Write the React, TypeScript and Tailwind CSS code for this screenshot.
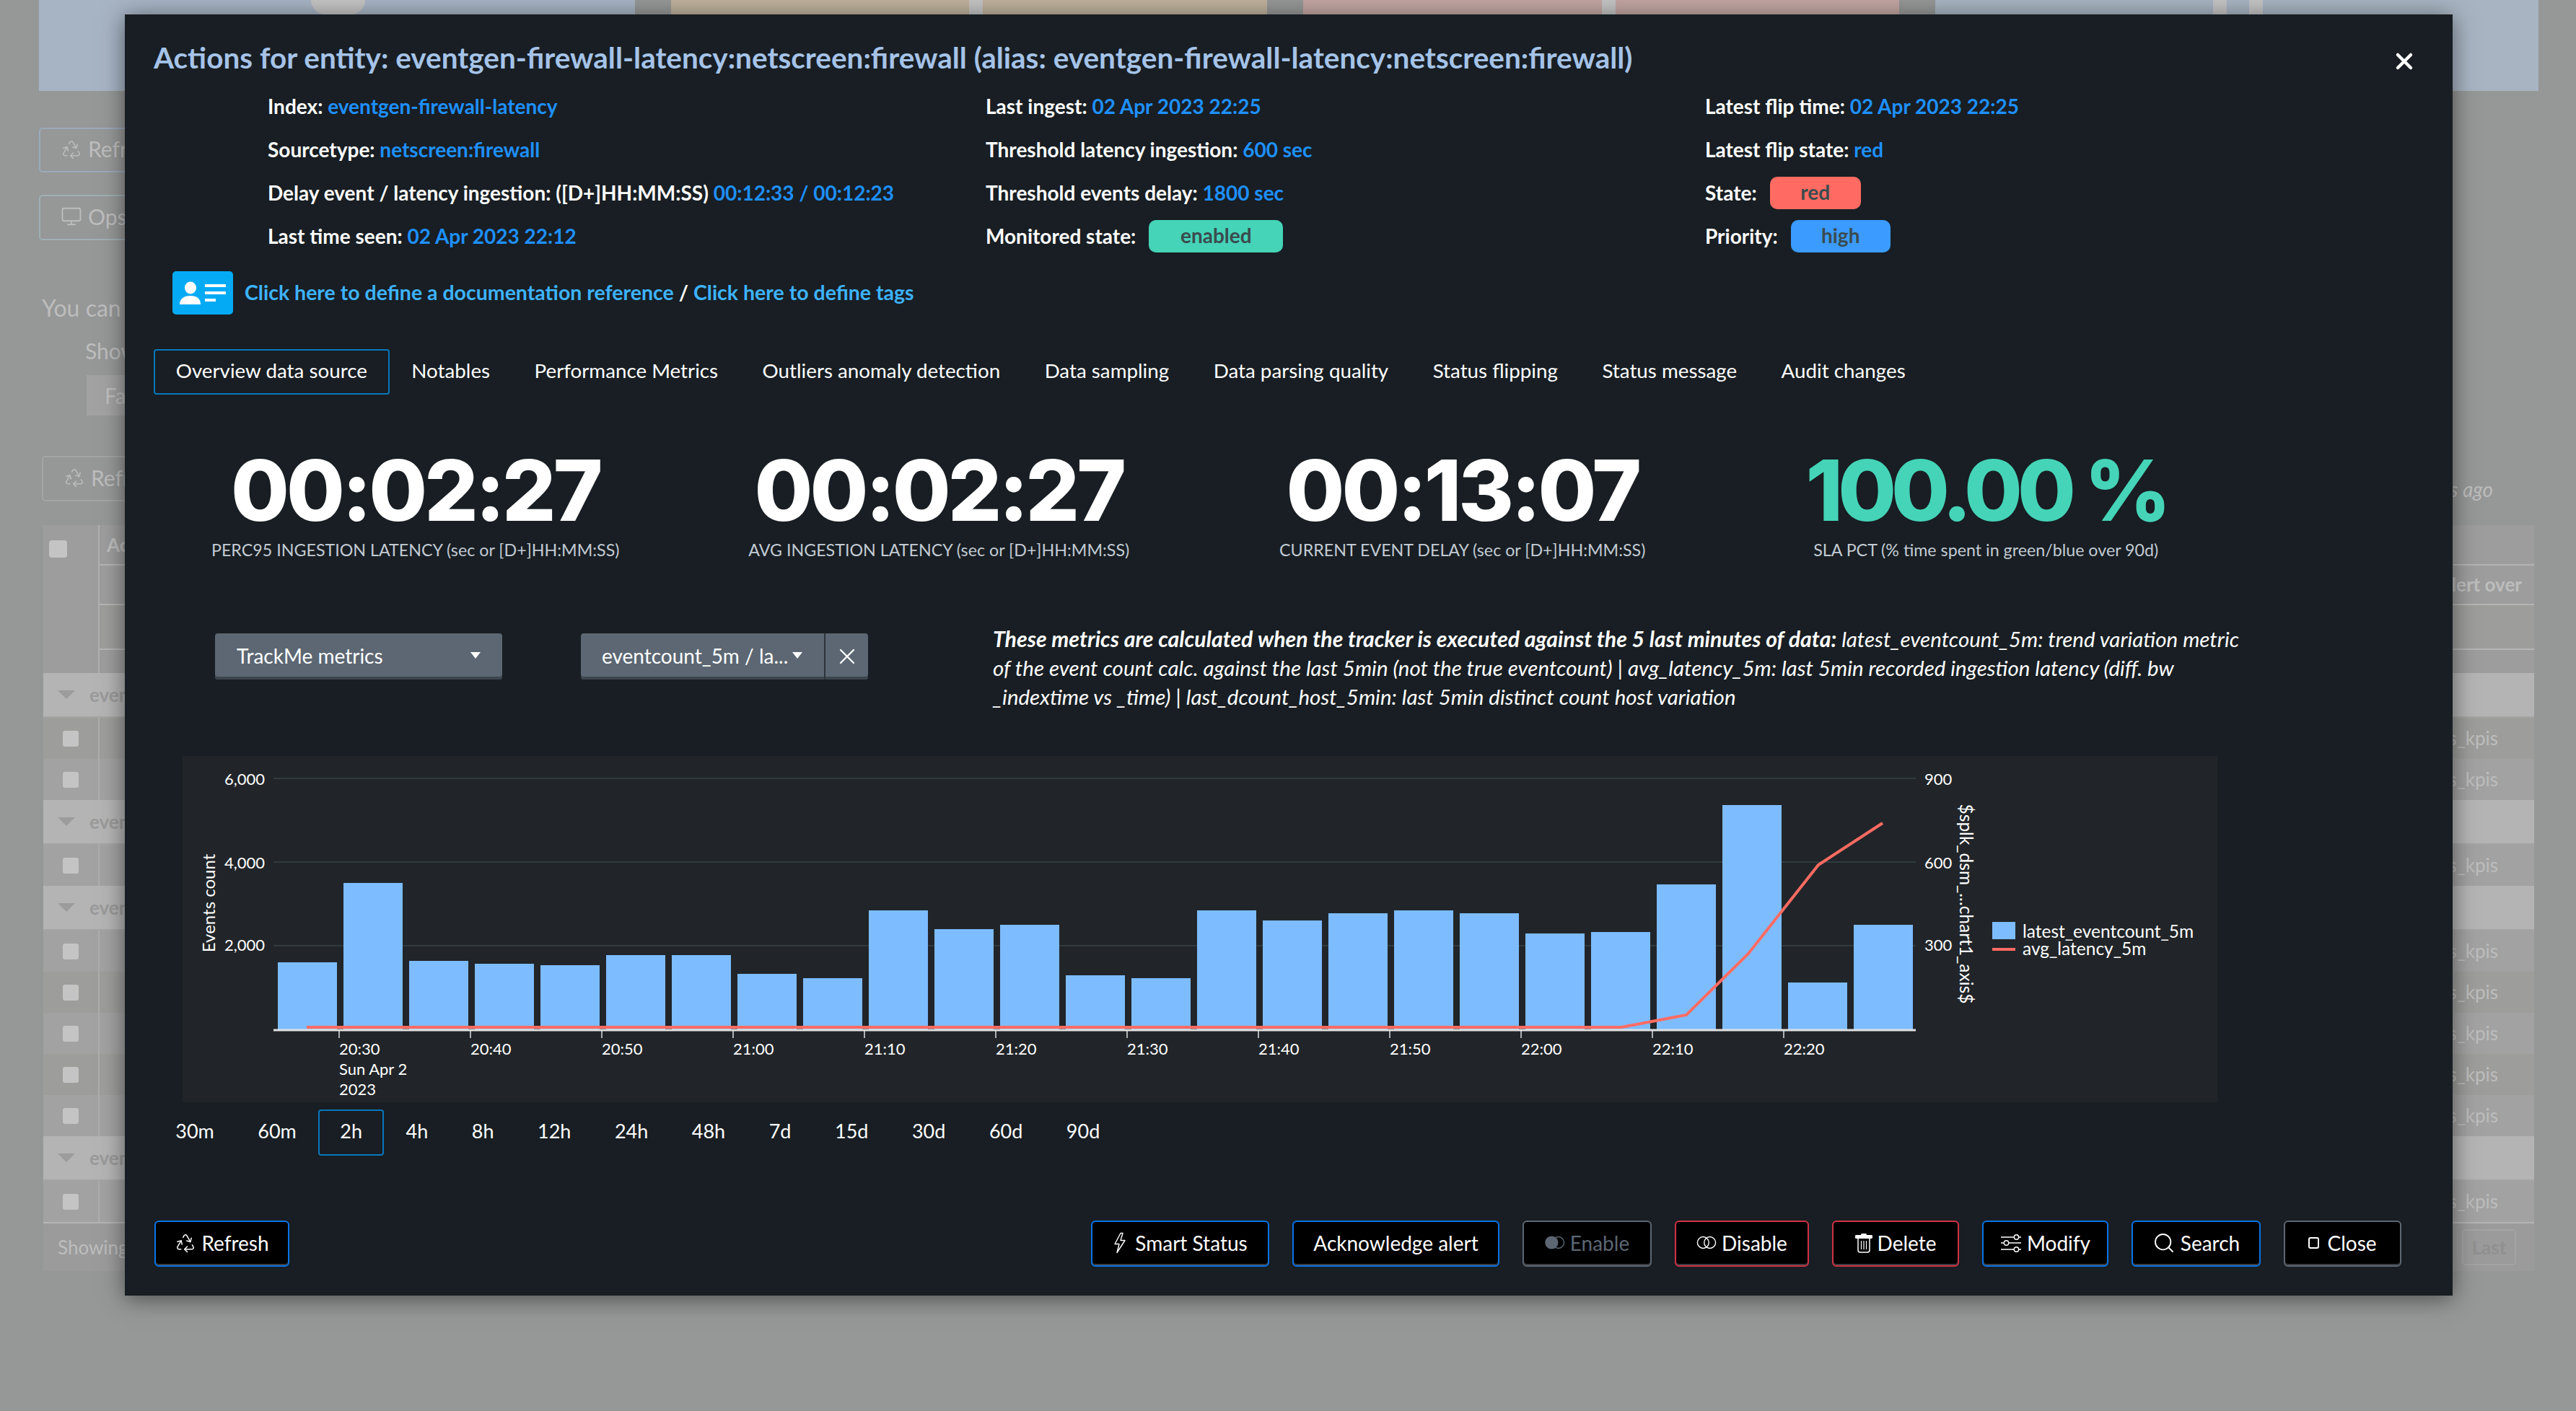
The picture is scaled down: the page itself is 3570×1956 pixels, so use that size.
import { Recycle, Monitor, Search, X } from 'lucide-react';

const barTops = [1334, 1224, 1332, 1336, 1338, 1324, 1324, 1350, 1356, 1262, 1288, 1282, 1352, 1356, 1262, 1276, 1266, 1262, 1266, 1294, 1292, 1226, 1116, 1362, 1282];
const ticks = ['20:30', '20:40', '20:50', '21:00', '21:10', '21:20', '21:30', '21:40', '21:50', '22:00', '22:10', '22:20'];
const tabs = ['Overview data source', 'Notables', 'Performance Metrics', 'Outliers anomaly detection', 'Data sampling', 'Data parsing quality', 'Status flipping', 'Status message', 'Audit changes'];
const ranges = ['30m', '60m', '2h', '4h', '8h', '12h', '24h', '48h', '7d', '15d', '30d', '60d', '90d'];
const singles = [
  { value: '00:02:27', label: 'PERC95 INGESTION LATENCY (sec or [D+]HH:MM:SS)', cls: 'text-white tracking-[-4px]' },
  { value: '00:02:27', label: 'AVG INGESTION LATENCY (sec or [D+]HH:MM:SS)', cls: 'text-white tracking-[-4px]' },
  { value: '00:13:07', label: 'CURRENT EVENT DELAY (sec or [D+]HH:MM:SS)', cls: 'text-white tracking-[-4px]' },
  { value: '100.00 %', label: 'SLA PCT (% time spent in green/blue over 90d)', cls: 'text-[#45d4b8] tracking-[-7px]' },
];
// g = group row, d = dark row, l = light row
const tableRows = ['g', 'd', 'l', 'g', 'l', 'g', 'l', 'd', 'l', 'd', 'l', 'g', 'l'];

const Val = ({ children }: { children: React.ReactNode }) => <span className="text-[#1e90ff]">{children}</span>;

const Info = ({ children }: { children: React.ReactNode }) => (
  <div className="flex h-[60px] items-center whitespace-pre pb-[2px]">{children}</div>
);

const Badge = ({ text, cls }: { text: string; cls: string }) => (
  <span className={`ml-[18px] flex h-[45px] items-center justify-center rounded-[10px] pb-[2px] text-[#3a4b4e] ${cls}`}>{text}</span>
);

const ToggleIcon = ({ filled }: { filled?: boolean }) => (
  <svg width="28" height="19" viewBox="0 0 30 20" fill="none" stroke="currentColor" strokeWidth="1.5">
    <circle cx="20" cy="10" r="8.5" />
    {filled ? <circle cx="10" cy="10" r="9" fill="currentColor" /> : <circle cx="10" cy="10" r="8.5" />}
  </svg>
);

const BoltIcon = () => (
  <svg width="20" height="30" viewBox="0 0 20 30" fill="none" stroke="currentColor" strokeWidth="1.4" strokeLinejoin="round" className="mr-[4px]">
    <path d="M11 1.5 3 16.5h6L6 28.5 17 11.5h-6l3-10z" />
  </svg>
);

const TrashIcon = () => (
  <svg width="24" height="28" viewBox="0 0 24 28" fill="none" stroke="currentColor" strokeWidth="1.5">
    <path d="M8 2.5a1.5 1.5 0 0 1 1.5-1.5h5A1.5 1.5 0 0 1 16 2.5V3h6a2 2 0 0 1 0 5H2a2 2 0 0 1 0-5h6z" fill="currentColor" stroke="none" />
    <path d="M4 8v16a3 3 0 0 0 3 3h10a3 3 0 0 0 3-3V8" />
    <path d="M8.5 11v12M12 11v12M15.5 11v12" strokeWidth="1.2" />
  </svg>
);

const SlidersIcon = () => (
  <svg width="30" height="26" viewBox="0 0 30 26" fill="none" stroke="currentColor" strokeWidth="1.4">
    <path d="M1 5h18M26 5h3M1 13h4M12 13h17M1 22h18M26 22h3" />
    <circle cx="22.5" cy="5" r="3.2" />
    <circle cx="8.5" cy="13" r="3.2" />
    <circle cx="22.5" cy="22" r="3.2" />
  </svg>
);

const ActionButton = ({ w, tone, children }: { w: string; tone: string; children: React.ReactNode }) => (
  <button className={`flex h-[64px] items-center justify-center gap-[7px] rounded-[6px] border-2 bg-black pb-[3px] text-[28px] text-white shadow-[inset_0_-2px_0_#3a3c40] ${w} ${tone}`}>
    {children}
  </button>
);

const Chart = () => (
  <svg viewBox="0 0 2820 480" className="h-[480px] w-[2820px]" fontFamily="Lato, sans-serif" fontSize="22" fill="#ffffff">
    {[31, 147, 263].map((y) => (
      <line key={y} x1="126" x2="2402" y1={y} y2={y} stroke="#2f3b40" strokeWidth="2" />
    ))}
    {barTops.map((top, i) => (
      <rect key={i} x={132 + i * 91} y={top - 1048} width="82" height={1427 - top} fill="#7dbcff" />
    ))}
    <line x1="126" x2="2402" y1="380" y2="380" stroke="#dfe0e2" strokeWidth="3" />
    <polyline points="172,376 1994,376 2084,359 2170,274 2267,151 2356,93" fill="none" stroke="#ff6b62" strokeWidth="4" />
    {ticks.map((t, i) => (
      <g key={t}>
        <line x1={217 + i * 182} x2={217 + i * 182} y1="381" y2="391" stroke="#dfe0e2" strokeWidth="1.5" />
        <text x={217 + i * 182} y="414">{t}</text>
      </g>
    ))}
    <text x="217" y="442">Sun Apr 2</text>
    <text x="217" y="470">2023</text>
    {[['6,000', 40], ['4,000', 156], ['2,000', 270]].map(([t, y]) => (
      <text key={t} x="114" y={y} textAnchor="end">{t}</text>
    ))}
    {[['900', 40], ['600', 156], ['300', 270]].map(([t, y]) => (
      <text key={t} x="2414" y={y}>{t}</text>
    ))}
    <text transform="translate(45 204) rotate(-90)" textAnchor="middle" fontSize="24">Events count</text>
    <text transform="translate(2463 205) rotate(90)" textAnchor="middle" fontSize="24.5">$splk_dsm_...chart1_axis$</text>
    <rect x="2508" y="230" width="32" height="24" fill="#7dbcff" />
    <text x="2550" y="252" fontSize="24.5">latest_eventcount_5m</text>
    <rect x="2508" y="266" width="32" height="4" fill="#ff6b62" />
    <text x="2550" y="276" fontSize="24.5">avg_latency_5m</text>
  </svg>
);

const PageBehind = () => (
  <div className="flex flex-col text-[#bdbdbd]">
    <div className="flex h-[126px] gap-[50px] pl-[54px]">
      <div className="h-full w-[826px] bg-[#a7b4c4] pl-[377px]"><div className="h-[20px] w-[75px] rounded-b-[30px] bg-[#c4c4c4]" /></div>
      <div className="h-full w-[826px] bg-[#bfb19d] pl-[413px]"><div className="h-[20px] w-[19px] bg-[#c4c4c4]" /></div>
      <div className="h-full w-[826px] bg-[#c2a6a3] pl-[414px]"><div className="h-[20px] w-[19px] bg-[#c4c4c4]" /></div>
      <div className="flex h-full w-[836px] gap-[31px] bg-[#a8b4c2] pl-[385px]">
        <div className="h-[20px] w-[19px] bg-[#c4c4c4]" />
        <div className="h-[20px] w-[19px] bg-[#c4c4c4]" />
      </div>
    </div>
    <div className="mt-[51px] ml-[54px] flex h-[62px] w-[300px] items-center gap-[8px] rounded-[5px] border-2 border-[#9aaabb] pb-[3px] pl-[28px] text-[30px]"><Recycle size={30} strokeWidth={1.25} />Refresh</div>
    <div className="mt-[31px] ml-[54px] flex h-[63px] w-[300px] items-center gap-[8px] rounded-[5px] border-2 border-[#9fb0b5] pb-[3px] pl-[28px] text-[30px]"><Monitor size={30} strokeWidth={1.5} />Ops:</div>
    <div className="mt-[74px] ml-[58px] h-[40px] text-[32px] leading-[40px]">You can</div>
    <div className="mt-[19px] ml-[118px] h-[40px] text-[30px] leading-[40px]">Show</div>
    <div className="mt-[14px] ml-[120px] h-[56px] w-[300px] bg-[#a2a2a2] pl-[25px] text-[30px] leading-[56px]">Fa</div>
    <div className="mt-[56px] ml-[58px] flex h-[63px] items-end justify-between pr-[115px]">
      <div className="flex h-full w-[300px] items-center gap-[8px] rounded-[5px] border-2 border-[#a5a5a5] pb-[3px] pl-[28px] text-[30px]"><Recycle size={30} strokeWidth={1.25} />Refresh</div>
      <span className="-mb-[4px] text-[28px] italic">s ago</span>
    </div>
    <div className="mt-[33px] ml-[60px] w-[3452px] text-[26px]">
      <div className="flex h-[205px] bg-[#9d9d9d]">
        <div className="w-[78px] border-r-2 border-[#b0b0b0] pl-[8px] pt-[21px]"><div className="h-[24px] w-[25px] rounded-[4px] bg-[#c4c4c4]" /></div>
        <div className="flex flex-1 flex-col">
          <div className="flex h-[56px] items-center border-b-2 border-[#b5b5b5] pl-[10px] font-bold">Actions</div>
          <div className="flex h-[55px] items-center justify-end border-b-2 border-[#b5b5b5] pr-[17px] font-bold">Alert over</div>
          <div className="h-[62px] border-b-2 border-[#b5b5b5] bg-[#9d9d9b]" />
        </div>
      </div>
      {tableRows.map((r, i) =>
        r === 'g' ? (
          <div key={i} className="flex h-[62px] items-center border-b-2 border-[#a5a5a5] bg-[#b4b4b4] pl-[20px] font-bold text-[#9a9a9a]">
            <div className="h-0 w-0 border-x-[12px] border-t-[12px] border-x-transparent border-t-[#9c9c9c]" />
            <span className="ml-[20px]">eventgen</span>
          </div>
        ) : (
          <div key={i} className={`flex h-[57px] items-center justify-between pr-[50px] ${r === 'd' ? 'bg-[#9d9d9b]' : 'bg-[#a2a2a2]'}`}>
            <div className="flex h-full w-[78px] items-center justify-end border-r-2 border-[#adadad] pr-[27px]"><div className="h-[22px] w-[22px] rounded-[3px] bg-[#c4c4c4]" /></div>
            <span>metrics_kpis</span>
          </div>
        ),
      )}
      <div className="flex h-[68px] items-center justify-between border-t-2 border-[#b5b5b5] bg-[#9b9b9b] pl-[20px] pr-[25px]">
        <span>Showing</span>
        <span className="flex h-[50px] w-[75px] items-center justify-center rounded-[5px] border-2 border-[#a3a3a3] font-bold text-[#909090]">Last</span>
      </div>
    </div>
  </div>
);

const App = () => (
  <div className="relative h-[1956px] w-[3570px] overflow-hidden bg-[#969797] font-['Lato',sans-serif]">
    <PageBehind />
    <div className="absolute top-[20px] left-[173px] flex h-[1776px] w-[3226px] flex-col bg-[#181e23] text-[28px] text-white shadow-[0_4px_30px_rgba(0,0,0,0.5)]">
      <div className="flex h-[98px] items-start justify-between pt-[38px] pr-[49px] pl-[40px]">
        <h1 className="text-[40.5px] leading-[44px] font-bold text-[#a5c3e8]">
          Actions for entity: eventgen-firewall-latency:netscreen:firewall (alias: eventgen-firewall-latency:netscreen:firewall)
        </h1>
        <X size={36} strokeWidth={3} className="mt-[9px]" />
      </div>

      <div className="ml-[198px] grid grid-cols-[995px_997px_1fr] font-bold">
        <div>
          <Info>Index: <Val>eventgen-firewall-latency</Val></Info>
          <Info>Sourcetype: <Val>netscreen:firewall</Val></Info>
          <Info>Delay event / latency ingestion: ([D+]HH:MM:SS) <Val>00:12:33 / 00:12:23</Val></Info>
          <Info>Last time seen: <Val>02 Apr 2023 22:12</Val></Info>
        </div>
        <div>
          <Info>Last ingest: <Val>02 Apr 2023 22:25</Val></Info>
          <Info>Threshold latency ingestion: <Val>600 sec</Val></Info>
          <Info>Threshold events delay: <Val>1800 sec</Val></Info>
          <Info>Monitored state:<Badge text="enabled" cls="w-[186px] bg-[#45d4b8]" /></Info>
        </div>
        <div>
          <Info>Latest flip time: <Val>02 Apr 2023 22:25</Val></Info>
          <Info>Latest flip state: <Val>red</Val></Info>
          <Info>State:<Badge text="red" cls="w-[126px] bg-[#ff6b62]" /></Info>
          <Info>Priority:<Badge text="high" cls="w-[138px] bg-[#3b9bff]" /></Info>
        </div>
      </div>

      <div className="mt-[18px] ml-[66px] flex h-[60px] items-center gap-[16px] text-[28.5px] font-bold text-[#3db3ff]">
        <svg width="84" height="60" viewBox="0 0 84 60">
          <rect width="84" height="60" rx="5" fill="#05aaf5" />
          <ellipse cx="25" cy="23" rx="8" ry="8.5" fill="#fff" />
          <path d="M10 46c0-8 6-12 15-12s14 4 14 12z" fill="#fff" />
          <rect x="45" y="18" width="29" height="4" fill="#fff" />
          <rect x="45" y="28" width="29" height="4" fill="#fff" />
          <rect x="45" y="38" width="15" height="4" fill="#fff" />
        </svg>
        <span className="pb-[2px]">Click here to define a documentation reference <span className="text-white">/</span> Click here to define tags</span>
      </div>

      <div className="mt-[48px] ml-[40px] flex text-[27.75px]">
        {tabs.map((t, i) => (
          <div key={t} className={`flex h-[63px] items-center rounded-[4px] border-2 px-[28.75px] pb-[3px] ${i === 0 ? 'border-[#0877bb]' : 'border-transparent'}`}>{t}</div>
        ))}
      </div>

      <div className="mt-[73px] ml-[40px] grid w-[2902px] grid-cols-4">
        {singles.map((s) => (
          <div key={s.label} className="flex flex-col items-center">
            <div className={`h-[120px] font-['Inter',sans-serif] text-[117px] leading-[120px] font-extrabold ${s.cls}`}>{s.value}</div>
            <div className="mt-[6px] text-[23.25px] leading-[32px] text-[#c3cbd4]">{s.label}</div>
          </div>
        ))}
      </div>

      <div className="mt-[89px] ml-[125px] flex items-start">
        <div className="mt-[11px] flex h-[64px] w-[398px] items-center justify-between rounded-[4px] bg-[#5c6773] pr-[30px] pb-[3px] pl-[30px] shadow-[inset_0_-4px_0_#3d454e]">
          TrackMe metrics
          <span className="h-0 w-0 border-x-[7px] border-t-[9px] border-x-transparent border-t-white" />
        </div>
        <div className="mt-[11px] ml-[109px] flex h-[64px] w-[398px] rounded-[4px] bg-[#5c6773] shadow-[inset_0_-4px_0_#3d454e]">
          <div className="flex flex-1 items-center justify-between border-r-2 border-[#2d343b] pr-[30px] pb-[3px] pl-[29px]">
            <span>eventcount_5m / la...</span>
            <span className="h-0 w-0 border-x-[7px] border-t-[9px] border-x-transparent border-t-white" />
          </div>
          <div className="flex w-[59px] items-center justify-center"><X size={36} strokeWidth={1.5} /></div>
        </div>
        <p className="-mt-[2px] ml-[173px] whitespace-pre text-[29.5px] leading-[40px] italic">
          <b className="text-[30.25px]">These metrics are calculated when the tracker is executed against the 5 last minutes of data:</b> latest_eventcount_5m: trend variation metric{'\n'}
          of the event count calc. against the last 5min (not the true eventcount) | avg_latency_5m: last 5min recorded ingestion latency (diff. bw{'\n'}
          _indextime vs _time) | last_dcount_host_5min: last 5min distinct count host variation
        </p>
      </div>

      <div className="mt-[62px] ml-[80px] h-[480px] w-[2820px] bg-[#212529]">
        <Chart />
      </div>

      <div className="mt-[10px] ml-[40px] flex text-[27px]">
        {ranges.map((r) => (
          <div key={r} className={`flex h-[64px] items-center rounded-[4px] border-2 px-[28.25px] pb-[3px] ${r === '2h' ? 'border-[#0877bb]' : 'border-transparent'}`}>{r}</div>
        ))}
      </div>

      <div className="mt-[90px] flex justify-between pr-[71px] pl-[41px]">
        <ActionButton w="w-[187px]" tone="border-[#0a74e6]"><Recycle size={30} strokeWidth={1.2} />Refresh</ActionButton>
        <div className="flex gap-[32px]">
          <ActionButton w="w-[247px]" tone="border-[#0a74e6]"><BoltIcon />Smart Status</ActionButton>
          <ActionButton w="w-[287px]" tone="border-[#0a74e6]">Acknowledge alert</ActionButton>
          <ActionButton w="w-[179px]" tone="border-[#5c6773] !text-[#5c6773]"><ToggleIcon filled />Enable</ActionButton>
          <ActionButton w="w-[186px]" tone="border-[#d13245]"><ToggleIcon />Disable</ActionButton>
          <ActionButton w="w-[176px]" tone="border-[#d13245]"><TrashIcon />Delete</ActionButton>
          <ActionButton w="w-[175px]" tone="border-[#0a74e6]"><SlidersIcon />Modify</ActionButton>
          <ActionButton w="w-[179px]" tone="border-[#0a74e6]"><Search size={32} strokeWidth={1.4} />Search</ActionButton>
          <ActionButton w="w-[163px]" tone="border-[#5c6773]"><span className="mr-[4px] h-[16px] w-[15px] rounded-[3px] border-2 border-white" />Close</ActionButton>
        </div>
      </div>
    </div>
  </div>
);

export default App;
